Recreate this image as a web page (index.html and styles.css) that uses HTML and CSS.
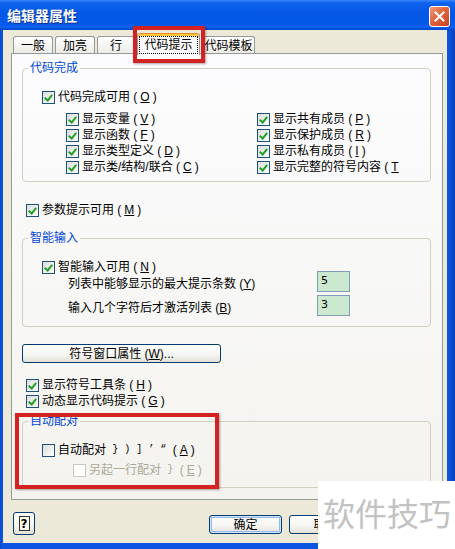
FILE: index.html
```html
<!DOCTYPE html>
<html lang="zh-CN">
<head>
    <meta charset="UTF-8">
    <meta name="viewport" content="width=device-width, initial-scale=1.0">
    <title>编辑器属性</title>
    <link rel="stylesheet" href="styles.css">
</head>
<body>
    <div class="window">
        <div class="titlebar">
            <span class="title">编辑器属性</span>
            <span class="close">
                <svg width="11" height="11" viewBox="0 0 11 11">
                    <path d="M1.5 1.5 L9.5 9.5 M9.5 1.5 L1.5 9.5" stroke="#fff" stroke-width="2" stroke-linecap="square"/>
                </svg>
            </span>
        </div>

        <div class="client">
            <div class="tabs">
                <span class="tab">一般</span>
                <span class="tab">加亮</span>
                <span class="tab tab-line">行</span>
                <span class="tab active"><span class="focus">代码提示</span></span>
                <span class="tab tab-last">代码模板</span>
            </div>

            <div class="panel">
                <fieldset class="group">
                    <legend>代码完成</legend>
                    <div class="group-body complete">
                        <label class="check"><span class="box on"></span>代码完成可用 (<u>O</u>)</label>
                        <div class="sub-grid">
                            <label class="check"><span class="box on"></span>显示变量 (<u>V</u>)</label>
                            <label class="check"><span class="box on"></span>显示共有成员 (<u>P</u>)</label>
                            <label class="check"><span class="box on"></span>显示函数 (<u>F</u>)</label>
                            <label class="check"><span class="box on"></span>显示保护成员 (<u>R</u>)</label>
                            <label class="check"><span class="box on"></span>显示类型定义 (<u>D</u>)</label>
                            <label class="check"><span class="box on"></span>显示私有成员 (<u>I</u>)</label>
                            <label class="check"><span class="box on"></span>显示类/结构/联合 (<u>C</u>)</label>
                            <label class="check"><span class="box on"></span>显示完整的符号内容 (<u>T</u>)</label>
                        </div>
                    </div>
                </fieldset>

                <label class="check panel-check param"><span class="box on"></span>参数提示可用 (<u>M</u>)</label>

                <fieldset class="group smart">
                    <legend>智能输入</legend>
                    <div class="group-body smart-body">
                        <label class="check"><span class="box on"></span>智能输入可用 (<u>N</u>)</label>
                        <div class="fields">
                            <span class="field-label">列表中能够显示的最大提示条数 (<u>Y</u>)</span>
                            <span class="input">5</span>
                            <span class="field-label">输入几个字符后才激活列表 (<u>B</u>)</span>
                            <span class="input">3</span>
                        </div>
                    </div>
                </fieldset>

                <button class="btn wide">符号窗口属性 (<u>W</u>)...</button>

                <label class="check panel-check toolbar"><span class="box on"></span>显示符号工具条 (<u>H</u>)</label>
                <label class="check panel-check"><span class="box on"></span>动态显示代码提示 (<u>G</u>)</label>

                <fieldset class="group pair">
                    <legend>自动配对</legend>
                    <div class="group-body pair-body">
                        <label class="check tall"><span class="box"></span>自动配对 <span class="sym">} ) ] ’ “</span> (<u>A</u>)</label>
                        <label class="check tall disabled"><span class="box"></span>另起一行配对 <span class="sym">}</span> (<u>E</u>)</label>
                    </div>
                </fieldset>
            </div>

            <div class="footer">
                <button class="btn help"><span class="help-icon">?</span></button>
                <button class="btn default">确定</button>
                <button class="btn cancel">取消</button>
            </div>
        </div>

        <div class="mark mark-tab"></div>
        <div class="mark mark-pair"></div>
        <div class="watermark">软件技巧</div>
    </div>
</body>
</html>
```

FILE: styles.css
```css
* {
    margin: 0;
    padding: 0;
    box-sizing: border-box;
}

body {
    font-family: "Liberation Sans", "Noto Sans CJK SC", sans-serif;
    font-size: 12px;
    color: #000;
    background: #fff;
}

.window {
    position: relative;
    width: 455px;
    height: 549px;
    overflow: hidden;
    display: flex;
    flex-direction: column;
    background: linear-gradient(90deg, #0a47c9 0, #0b55e0 2px, #0b55e0 448px, #0a3fbf 455px);
}

/* title bar */
.titlebar {
    flex: none;
    height: 30px;
    display: flex;
    align-items: center;
    justify-content: space-between;
    padding: 0 5px 0 7px;
    color: #fff;
    background: linear-gradient(#3a89fa 0%, #0f63ec 9%, #0558e6 40%, #0458e8 80%, #0a62ee 90%, #0444c8 100%);
}

.title {
    font-family: "Noto Sans CJK SC", sans-serif;
    font-size: 14px;
    font-weight: bold;
    line-height: 16px;
    text-shadow: 1px 1px 0 #0a2f8a;
}

.close {
    width: 21px;
    height: 21px;
    margin-top: 3px;
    display: flex;
    align-items: center;
    justify-content: center;
    border: 1px solid #fff;
    border-radius: 3px;
    background: linear-gradient(135deg, #f09a7a 0%, #e0643f 45%, #c8431f 100%);
}

/* client area */
.client {
    flex: 1;
    margin: 0 8px 6px 3px;
    padding: 3px 4px 0 8px;
    background: #ECE9D8;
}

.tabs {
    display: flex;
    align-items: flex-end;
    height: 20px;
    padding-left: 2px;
}

.tab {
    width: 40px;
    height: 17px;
    margin-right: 2px;
    display: flex;
    align-items: center;
    justify-content: center;
    padding-top: 2px;
    line-height: 14px;
    border: 1px solid #919B9C;
    border-bottom: none;
    border-radius: 3px 3px 0 0;
    background: linear-gradient(#fff, #ECEBE6);
}

.tab-line {
    width: 38px;
}

.tab-last {
    width: 53px;
}

.tab.active {
    position: relative;
    z-index: 1;
    width: 63px;
    height: 22px;
    margin-bottom: -2px;
    padding-top: 0;
    border-top: 1px solid #E68B2C;
    box-shadow: inset 0 2px 0 #FFC73C;
    background: #FCFCFE;
}

.focus {
    border: 1px dotted #000;
    padding: 1px 4px;
    line-height: 14px;
}

/* tab page */
.panel {
    height: 447px;
    padding: 7px 11px 0 10px;
    border: 1px solid #919B9C;
    background: linear-gradient(#FCFCFE, #F4F3EE);
}

.group {
    min-width: 0;
    border: 1px solid #D0D0BF;
    border-radius: 4px;
}

.group legend {
    margin-left: 5px;
    padding: 0 2px;
    line-height: 14px;
    color: #0046D5;
}

.group-body {
    padding-left: 19px;
}

.complete {
    padding-top: 14px;
    padding-bottom: 6px;
}

.sub-grid {
    display: grid;
    grid-template-columns: 191px 143px;
    grid-auto-rows: 16px;
    margin-top: 6px;
    padding-left: 24px;
}

.check {
    display: flex;
    align-items: center;
    gap: 3px;
    height: 16px;
    line-height: 14px;
    white-space: pre;
    overflow: hidden;
}

.check.tall {
    height: 20px;
}

.box {
    position: relative;
    flex: none;
    width: 13px;
    height: 13px;
    border: 1px solid #1C5180;
    background: linear-gradient(135deg, #DCDCD7, #FFFFFF);
}

.box.on::after {
    content: "";
    position: absolute;
    left: 3px;
    top: 1px;
    width: 3px;
    height: 6px;
    border: solid #21A121;
    border-width: 0 2px 2px 0;
    transform: rotate(40deg);
}

.disabled {
    color: #ACA899;
    padding-left: 31px;
}

.disabled .box {
    border-color: #CAC8BB;
    background: #fff;
}

.sym {
    font-family: "Liberation Mono", monospace;
    font-size: 10px;
}

.panel-check {
    padding-left: 4px;
}

.param {
    margin-top: 20px;
}

.smart {
    margin-top: 13px;
}

.smart-body {
    padding-top: 14px;
    padding-bottom: 10px;
}

.fields {
    display: grid;
    grid-template-columns: 249px 33px;
    grid-auto-rows: 21px;
    row-gap: 3px;
    align-items: center;
    margin-top: -4px;
    padding-left: 26px;
}

.field-label {
    white-space: nowrap;
    padding-top: 2px;
}

.input {
    height: 21px;
    padding: 2px 3px;
    font-family: "DejaVu Sans", sans-serif;
    font-size: 11px;
    line-height: 13px;
    border: 1px solid #7F9DB9;
    background: #CCE8CF;
}

/* buttons */
.btn {
    font-family: inherit;
    font-size: 12px;
    color: #000;
    border: 1px solid #003C74;
    border-radius: 3px;
    background: linear-gradient(#FFFFFF 0%, #F4F4F0 60%, #E3E0D6 100%);
}

.wide {
    display: block;
    width: 199px;
    height: 19px;
    margin-top: 17px;
    line-height: 14px;
}

.toolbar {
    margin-top: 14px;
}

.pair {
    margin-top: 5px;
}

.pair-body {
    padding-top: 12px;
    padding-bottom: 7px;
}

.footer {
    display: flex;
    align-items: flex-start;
    padding-top: 12px;
}

.help {
    width: 22px;
    height: 23px;
    margin-left: 2px;
    display: flex;
    align-items: center;
    justify-content: center;
}

.help-icon {
    width: 11px;
    height: 15px;
    display: flex;
    align-items: center;
    justify-content: center;
    font-family: "DejaVu Sans", sans-serif;
    font-weight: bold;
    font-size: 12px;
    border: 1px solid #333;
    background: #FFFBE8;
}

.default,
.cancel {
    width: 73px;
    height: 19px;
    margin-top: 3px;
    line-height: 14px;
}

.default {
    margin-left: 174px;
    box-shadow: inset 0 0 0 1px #CEE7FF, inset 0 0 0 2px #98B8EA;
}

.cancel {
    margin-left: 7px;
}

/* annotations drawn over the dialog */
.mark {
    position: absolute;
    z-index: 2;
    border: 4px solid #D42222;
    box-shadow: 1px 1px 2px rgba(0, 0, 0, 0.35);
}

.mark-tab {
    left: 133px;
    top: 26px;
    width: 72px;
    height: 37px;
}

.mark-pair {
    left: 15px;
    top: 413px;
    width: 204px;
    height: 76px;
}

.watermark {
    position: absolute;
    z-index: 3;
    left: 318px;
    top: 481px;
    right: 0;
    bottom: 0;
    padding: 15px 0 0 5px;
    font-family: "Noto Sans CJK SC", sans-serif;
    font-size: 32px;
    line-height: 32px;
    color: #C2C2C2;
    background: #fff;
}
```
